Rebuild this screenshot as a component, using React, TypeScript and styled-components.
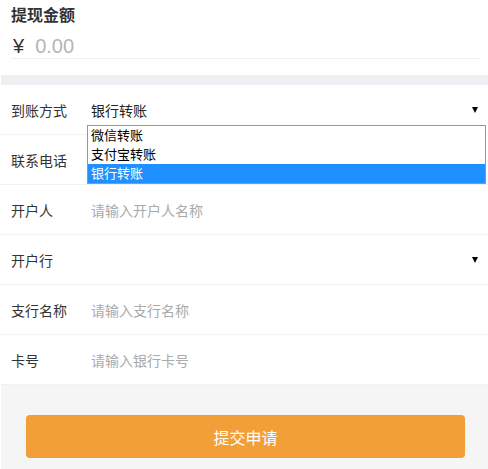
import React from "react"
import styled, {createGlobalStyle} from "styled-components"

const GlobalStyle = createGlobalStyle`
    html, body {
        margin: 0;
        padding: 0;
        background: #fff;
    }
    body {
        font-family: "Liberation Sans", "Noto Sans CJK SC", sans-serif;
        color: #333;
    }
`

const Page = styled.div`
    width: 488px;
    height: 469px;
    display: flex;
    flex-direction: column;
    overflow: hidden;
`

const AmountSection = styled.div`
    padding: 5px 8px 0 11px;
    height: 75px;
    box-sizing: border-box;
`

const AmountTitle = styled.div`
    font-size: 16px;
    font-weight: bold;
    line-height: 22px;
    color: #333;
`

const AmountRow = styled.div`
    display: flex;
    align-items: center;
    height: 24px;
    padding: 7px 0 0 2px;
    border-bottom: 1px solid #f0f0f0;
`

const Yen = styled.span`
    font-size: 20px;
    color: #333;
    margin-right: 11px;
`

const AmountValue = styled.span`
    font-size: 20px;
    color: #b5b5b5;
`

const Band = styled.div`
    height: 10px;
    margin-left: 1px;
    background: #efeff4;
`

const Form = styled.div`
    display: flex;
    flex-direction: column;
`

const Row = styled.div`
    position: relative;
    height: 50px;
    box-sizing: border-box;
    display: flex;
    align-items: center;
    padding-left: 11px;
    border-bottom: 1px solid #f2f2f2;
    font-size: 14px;
`

const Label = styled.div`
    width: 80px;
    flex: none;
    color: #333;
`

const Value = styled.div<{ readonly placeholder?: boolean }>`
    flex: 1;
    color: ${({placeholder}) => placeholder ? "#aaa" : "#222"};
`

const Arrow = styled.span`
    position: absolute;
    right: 10px;
    top: 50%;
    transform: translateY(-50%);
    width: 0;
    height: 0;
    border-left: 3px solid transparent;
    border-right: 3px solid transparent;
    border-top: 6px solid #000;
`

const OptionList = styled.div`
    position: absolute;
    left: 87px;
    top: 40px;
    width: 399px;
    box-sizing: border-box;
    border: 1px solid #7f9db9;
    background: #fff;
    z-index: 2;
    font-size: 13px;
`

const Option = styled.div<{ readonly selected?: boolean }>`
    height: 19px;
    line-height: 19px;
    padding-left: 3px;
    color: ${({selected}) => selected ? "#fff" : "#000"};
    background: ${({selected}) => selected ? "#1e90ff" : "transparent"};
`

const Footer = styled.div`
    flex: 1;
    margin-left: 1px;
    background: #f5f5f5;
    padding: 30px 23px 0 25px;
`

const SubmitButton = styled.button`
    width: 100%;
    height: 43px;
    border: none;
    border-radius: 4px;
    background: #f39f37;
    color: #fff;
    font-family: "Liberation Sans", "Noto Sans CJK SC", sans-serif;
    font-size: 16px;
`

const options = ["微信转账", "支付宝转账", "银行转账"]

const fields = [
    {label: "开户人", placeholder: "请输入开户人名称"},
    {label: "开户行", select: true},
    {label: "支行名称", placeholder: "请输入支行名称"},
    {label: "卡号", placeholder: "请输入银行卡号"},
]

export default function App() {
    return <Page>
        <GlobalStyle/>
        <AmountSection>
            <AmountTitle>提现金额</AmountTitle>
            <AmountRow>
                <Yen>¥</Yen>
                <AmountValue>0.00</AmountValue>
            </AmountRow>
        </AmountSection>
        <Band/>
        <Form>
            <Row>
                <Label>到账方式</Label>
                <Value>银行转账</Value>
                <Arrow/>
                <OptionList>
                    {options.map(o => <Option key={o} selected={o === "银行转账"}>{o}</Option>)}
                </OptionList>
            </Row>
            <Row>
                <Label>联系电话</Label>
                <Value/>
            </Row>
            {fields.map(f => <Row key={f.label}>
                <Label>{f.label}</Label>
                {f.select ? <Arrow/> : <Value placeholder>{f.placeholder}</Value>}
            </Row>)}
        </Form>
        <Footer>
            <SubmitButton>提交申请</SubmitButton>
        </Footer>
    </Page>
}
